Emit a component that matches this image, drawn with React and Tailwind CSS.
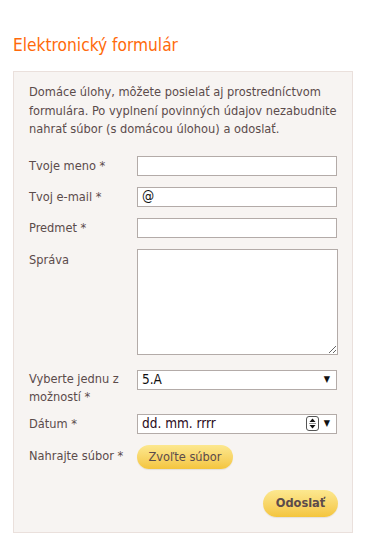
import React from 'react';

const font = { fontFamily: '"DejaVu Sans Condensed", "DejaVu Sans", sans-serif' };

const Label = ({ children, className = '' }) => (
  <div className={`w-[108px] shrink-0 text-[12.7px] leading-[18px] text-[#5b4b4b] ${className}`}>{children}</div>
);

const inputCls = 'h-[20px] w-[200px] border border-[#b3aba8] bg-white px-1 text-[13.5px] text-[#111] outline-none';

export default function App() {
  return (
    <div className="min-h-[550px] bg-white pt-[35px] px-[13px]" style={font}>
      {/* Title */}
      <h1 className="text-[17.2px] leading-[21px] text-[#ff6a0a]">Elektronický formulár</h1>

      <div className="mt-[15px] w-[340px] border border-[#eae0dc] bg-[#f7f4f2] pl-[15px] pr-[14px] pt-[11px] pb-[15px]">
        <p className="text-[12.7px] leading-[18.5px] text-[#5b4b4b]">
          Domáce úlohy, môžete posielať aj prostredníctvom formulára. Po vyplnení povinných údajov nezabudnite nahrať súbor (s domácou úlohou) a odoslať.
        </p>

        <div className="mt-[17px] flex flex-col">
          <div className="flex items-start">
            <Label className="pt-[1px]">Tvoje meno *</Label>
            <input className={inputCls} />
          </div>
          <div className="mt-[11px] flex items-start">
            <Label className="pt-[1px]">Tvoj e-mail *</Label>
            <input className={inputCls} defaultValue="@" />
          </div>
          <div className="mt-[11px] flex items-start">
            <Label className="pt-[1px]">Predmet *</Label>
            <input className={inputCls} />
          </div>
          <div className="mt-[11px] flex items-start">
            <Label className="w-[105px] pt-[2px]">Správa</Label>
            <textarea className="h-[106px] w-[203px] border border-[#b3aba8] bg-white outline-none" />
          </div>

          {/* Select */}
          <div className="mt-[15px] flex items-start">
            <Label>Vyberte jednu z možností *</Label>
            <div className="flex h-[20px] w-[200px] items-center justify-between border border-[#b3aba8] bg-white pl-[4px] pr-[6px] text-[13.5px] text-[#111]">
              <span>5.A</span>
              <span className="text-[9px]">▼</span>
            </div>
          </div>

          {/* Date */}
          <div className="mt-[8px] flex items-start">
            <Label className="pt-[1px]">Dátum *</Label>
            <div className="flex h-[20px] w-[200px] items-center justify-between border border-[#b3aba8] bg-white pl-[4px] pr-[6px] text-[13.5px] text-[#2a0a1a]">
              <span>dd. mm. rrrr</span>
              <div className="flex items-center gap-[5px]">
                <div className="flex h-[15px] w-[13px] flex-col items-center justify-center rounded-[3px] border border-[#555] bg-white">
                  <svg width="7" height="11" viewBox="0 0 7 11">
                    <path d="M3.5 0.5 L6.5 4 L0.5 4 Z" fill="#111" />
                    <line x1="0" y1="5.5" x2="7" y2="5.5" stroke="#777" strokeWidth="0.8" />
                    <path d="M0.5 7 L6.5 7 L3.5 10.5 Z" fill="#111" />
                  </svg>
                </div>
                <span className="text-[9px] text-[#111]">▼</span>
              </div>
            </div>
          </div>

          {/* File */}
          <div className="mt-[11px] flex items-start">
            <Label className="pt-[2px]">Nahrajte súbor *</Label>
            <button className="h-[24px] w-[96px] rounded-full bg-gradient-to-b from-[#fce88f] to-[#f4c53c] text-[12.7px] text-[#5b4b4b] shadow-[0_1px_1px_rgba(0,0,0,0.08)]">
              Zvoľte súbor
            </button>
          </div>

          <div className="mt-[21px] flex justify-end">
            <button className="h-[27px] w-[75px] rounded-full bg-gradient-to-b from-[#fce88f] to-[#f4c53c] text-[12.7px] font-bold text-[#5b4b4b] shadow-[0_1px_1px_rgba(0,0,0,0.08)]">
              Odoslať
            </button>
          </div>
        </div>
      </div>
    </div>
  );
}
